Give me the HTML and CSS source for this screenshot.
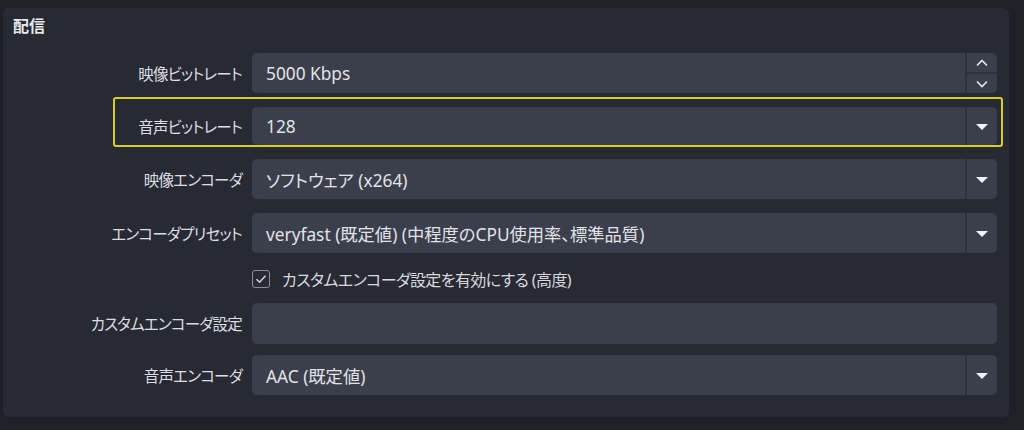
FILE: index.html
```html
<html>
  <head>
    <meta charset="utf-8">
    <link rel="stylesheet" href="styles.css">
  </head>
  <body>

    <div class="panel">
      <div class="title">配信</div>

      <div class="row">
        <div class="label">映像ビットレート</div>
        <div class="field">
          <span class="value">5000 Kbps</span>
          <div class="spin">
            <div class="spin-btn">
              <svg width="12" height="8" viewBox="0 0 12 8"><path d="M1 6.5 L6 1.5 L11 6.5" fill="none" stroke="#e6e7ec" stroke-width="1.6"/></svg>
            </div>
            <div class="spin-btn">
              <svg width="12" height="8" viewBox="0 0 12 8"><path d="M1 1.5 L6 6.5 L11 1.5" fill="none" stroke="#e6e7ec" stroke-width="1.6"/></svg>
            </div>
          </div>
        </div>
      </div>

      <div class="row marked">
        <div class="label">音声ビットレート</div>
        <div class="field">
          <span class="value">128</span>
          <div class="drop"><span class="arrow"></span></div>
        </div>
      </div>

      <div class="row">
        <div class="label">映像エンコーダ</div>
        <div class="field">
          <span class="value">ソフトウェア (x264)</span>
          <div class="drop"><span class="arrow"></span></div>
        </div>
      </div>

      <div class="row">
        <div class="label">エンコーダプリセット</div>
        <div class="field">
          <span class="value">veryfast (既定値) (中程度のCPU使用率、標準品質)</span>
          <div class="drop"><span class="arrow"></span></div>
        </div>
      </div>

      <div class="row check-row">
        <div class="label"></div>
        <div class="check">
          <span class="box">
            <svg width="14" height="14" viewBox="0 0 14 14"><path d="M2.5 7.2 L5.6 10.2 L11.5 3.8" fill="none" stroke="#d4d5da" stroke-width="1.5"/></svg>
          </span>
          <span>カスタムエンコーダ設定を有効にする (高度)</span>
        </div>
      </div>

      <div class="row custom">
        <div class="label">カスタムエンコーダ設定</div>
        <div class="field"></div>
      </div>

      <div class="row last">
        <div class="label">音声エンコーダ</div>
        <div class="field">
          <span class="value">AAC (既定値)</span>
          <div class="drop"><span class="arrow"></span></div>
        </div>
      </div>
    </div>

  </body>
</html>
```

FILE: styles.css
```css
body {
  margin: 0;
  background: #1f2128;
  font-family: "Noto Sans", "Noto Sans CJK JP", sans-serif;
  font-feature-settings: "palt";
  color: #d6d7dc;
}

.panel {
  margin: 8px 15px 0 3px;
  height: 409px;
  box-sizing: border-box;
  background: #272a33;
  border-radius: 6px;
  padding: 7px 12px 0 0;
}

.title {
  padding-left: 10px;
  font-size: 16px;
  font-weight: bold;
  line-height: 22px;
  color: #e8e9ee;
  margin-bottom: 16px;
}

.row {
  display: flex;
  align-items: center;
  margin-bottom: 14px;
  position: relative;
}

.label {
  width: 239px;
  flex: none;
  margin-right: 10px;
  text-align: right;
  font-size: 15.5px;
  letter-spacing: -0.8px;
  color: #dcdde2;
}

.field {
  flex: 1;
  height: 40px;
  display: flex;
  align-items: center;
  background: #3b3e4b;
  border-radius: 5px;
  font-size: 17.3px;
  color: #e2e3e8;
}

.value {
  flex: 1;
  padding-left: 14px;
}

/* spinner at right of bitrate */
.spin {
  width: 30px;
  height: 40px;
  border-left: 2px solid #2e313b;
  display: flex;
  flex-direction: column;
}
.spin-btn {
  flex: 1;
  display: flex;
  align-items: center;
  justify-content: center;
}
.spin-btn + .spin-btn {
  border-top: 2px solid #2e313b;
}

.drop {
  width: 30px;
  height: 40px;
  border-left: 2px solid #2e313b;
  display: flex;
  align-items: center;
  justify-content: center;
}
.arrow {
  width: 0;
  height: 0;
  border-left: 6px solid transparent;
  border-right: 6px solid transparent;
  border-top: 6px solid #f2f3f6;
  margin-top: 1px;
}

/* yellow mark round the audio bitrate row */
.marked::before {
  content: "";
  position: absolute;
  left: 110px;
  right: -6px;
  top: -10px;
  bottom: -2px;
  border: 2px solid #d6d024;
  border-radius: 3px;
  pointer-events: none;
}
.marked .field {
  height: 38px;
}
.marked .drop {
  height: 38px;
}

.check-row {
  height: 22px;
  margin-top: 15px;
  margin-bottom: 13px;
}
.check {
  display: flex;
  align-items: center;
  font-size: 16px;
  letter-spacing: -0.6px;
  color: #d8d9de;
}
.box {
  width: 16px;
  height: 16px;
  border: 1.5px solid #8d8f98;
  border-radius: 3px;
  margin-right: 12px;
  display: flex;
  align-items: center;
  justify-content: center;
}

.custom .field {
  height: 41px;
}
.custom {
  margin-bottom: 11px;
}
```
